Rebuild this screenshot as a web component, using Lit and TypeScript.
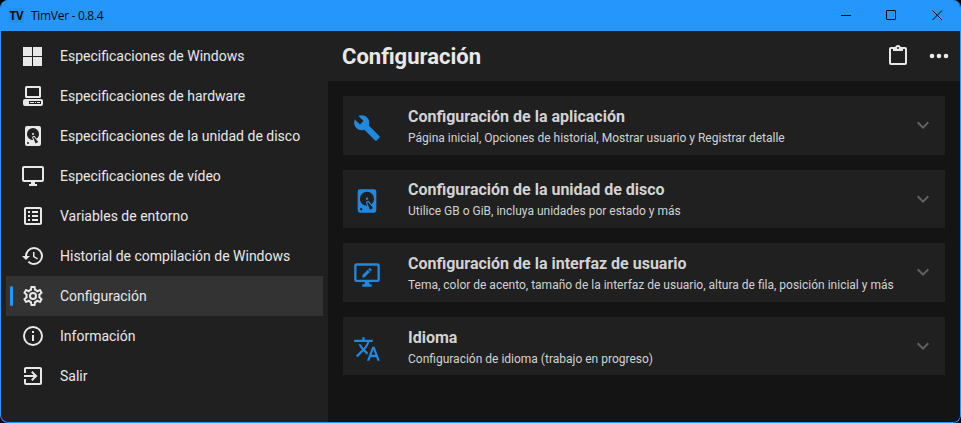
import { LitElement, html, css, svg } from "lit";
import { customElement, property } from "lit/decorators.js";

const ICONS: Record<string, string> = {
  windows: "M2,3H11V12H2V3M11,22H2V13H11V22M21,3V12H12V3H21M21,22H12V13H21V22Z",
  desktop:
    "M5.5,2H18.5A1.5,1.5 0 0,1 20,3.5V12.5A1.5,1.5 0 0,1 18.5,14H5.5A1.5,1.5 0 0,1 4,12.5V3.5A1.5,1.5 0 0,1 5.5,2M6,4V12H18V4H6M4,15H20A2,2 0 0,1 22,17V20A2,2 0 0,1 20,22H4A2,2 0 0,1 2,20V17A2,2 0 0,1 4,15M8,17V20H20V17H8M9,18H13V19H9V18M14,18H15V19H14V18M16,18H19V19H16V18Z",
  disk: "M6,2H18A2,2 0 0,1 20,4V20A2,2 0 0,1 18,22H6A2,2 0 0,1 4,20V4A2,2 0 0,1 6,2M12,4A6,6 0 0,0 6,10C6,13.31 8.69,16 12.1,16L11.22,13.77C10.95,13.29 11.11,12.68 11.59,12.4L12.45,11.9C12.93,11.63 13.54,11.79 13.82,12.27L15.74,14.69C17.12,13.59 18,11.9 18,10A6,6 0 0,0 12,4M12,9A1,1 0 0,1 13,10A1,1 0 0,1 12,11A1,1 0 0,1 11,10A1,1 0 0,1 12,9M7,18A1,1 0 0,0 6,19A1,1 0 0,0 7,20A1,1 0 0,0 8,19A1,1 0 0,0 7,18M12.09,13.27L14.58,19.58L17.17,18.08L12.95,12.77L12.09,13.27Z",
  monitor:
    "M21,16H3V4H21M21,2H3C1.89,2 1,2.89 1,4V16A2,2 0 0,0 3,18H10V20H8V22H16V20H14V18H21A2,2 0 0,0 23,16V4C23,2.89 22.1,2 21,2Z",
  monitorEdit:
    "M21,16V4H3V16H21M21,2A2,2 0 0,1 23,4V16A2,2 0 0,1 21,18H14V20H16V22H8V20H10V18H3A2,2 0 0,1 1,16V4A2,2 0 0,1 3,2H21M8,12.3L12.7,7.6L14.5,9.4L9.8,14.1H8V12.3M13.2,7.1L14.1,6.2C14.3,6 14.6,6 14.8,6.2L15.9,7.3C16.1,7.5 16.1,7.8 15.9,8L15,8.9L13.2,7.1Z",
  list: "M11 15H17V17H11V15M9 7H7V9H9V7M11 13H17V11H11V13M11 9H17V7H11V9M9 11H7V13H9V11M21 5V19C21 20.1 20.1 21 19 21H5C3.9 21 3 20.1 3 19V5C3 3.9 3.9 3 5 3H19C20.1 3 21 3.9 21 5M19 5H5V19H19V5M9 15H7V17H9V15Z",
  history:
    "M13.5,8H12V13L16.28,15.54L17,14.33L13.5,12.25V8M13,3A9,9 0 0,0 4,12H1L4.96,16.03L9,12H6A7,7 0 0,1 13,5A7,7 0 0,1 20,12A7,7 0 0,1 13,19C11.07,19 9.32,18.21 8.06,16.94L6.64,18.36C8.27,20 10.5,21 13,21A9,9 0 0,0 22,12A9,9 0 0,0 13,3",
  cog: "M12,8A4,4 0 0,1 16,12A4,4 0 0,1 12,16A4,4 0 0,1 8,12A4,4 0 0,1 12,8M12,10A2,2 0 0,0 10,12A2,2 0 0,0 12,14A2,2 0 0,0 14,12A2,2 0 0,0 12,10M10,22C9.75,22 9.54,21.82 9.5,21.58L9.13,18.93C8.5,18.68 7.96,18.34 7.44,17.94L4.95,18.95C4.73,19.03 4.46,18.95 4.34,18.73L2.34,15.27C2.21,15.05 2.27,14.78 2.46,14.63L4.57,12.97L4.5,12L4.57,11L2.46,9.37C2.27,9.22 2.21,8.95 2.34,8.73L4.34,5.27C4.46,5.05 4.73,4.96 4.95,5.05L7.44,6.05C7.96,5.66 8.5,5.32 9.13,5.07L9.5,2.42C9.54,2.18 9.75,2 10,2H14C14.25,2 14.46,2.18 14.5,2.42L14.87,5.07C15.5,5.32 16.04,5.66 16.56,6.05L19.05,5.05C19.27,4.96 19.54,5.05 19.66,5.27L21.66,8.73C21.79,8.95 21.73,9.22 21.54,9.37L19.43,11L19.5,12L19.43,13L21.54,14.63C21.73,14.78 21.79,15.05 21.66,15.27L19.66,18.73C19.54,18.95 19.27,19.04 19.05,18.95L16.56,17.95C16.04,18.34 15.5,18.68 14.87,18.93L14.5,21.58C14.46,21.82 14.25,22 14,22H10M11.25,4L10.88,6.61C9.68,6.86 8.62,7.5 7.85,8.39L5.44,7.35L4.69,8.65L6.8,10.2C6.4,11.37 6.4,12.64 6.8,13.8L4.68,15.36L5.43,16.66L7.86,15.62C8.63,16.5 9.68,17.14 10.87,17.38L11.24,20H12.76L13.13,17.39C14.32,17.14 15.37,16.5 16.14,15.62L18.57,16.66L19.32,15.36L17.2,13.81C17.6,12.64 17.6,11.37 17.2,10.2L19.31,8.65L18.56,7.35L16.15,8.39C15.38,7.5 14.32,6.86 13.12,6.62L12.75,4H11.25Z",
  info: "M11,9H13V7H11M12,20C7.59,20 4,16.41 4,12C4,7.59 7.59,4 12,4C16.41,4 20,7.59 20,12C20,16.41 16.41,20 12,20M12,2A10,10 0 0,0 2,12A10,10 0 0,0 12,22A10,10 0 0,0 22,12A10,10 0 0,0 12,2M11,17H13V11H11V17Z",
  exit: "M19,3H5C3.89,3 3,3.89 3,5V9H5V5H19V19H5V15H3V19A2,2 0 0,0 5,21H19A2,2 0 0,0 21,19V5C21,3.89 20.1,3 19,3M10.08,15.58L11.5,17L16.5,12L11.5,7L10.08,8.41L12.67,11H3V13H12.67L10.08,15.58Z",
  wrench:
    "M22.7,19L13.6,9.9C14.5,7.6 14,4.9 12.1,3C10.1,1 7.1,0.6 4.7,1.7L9,6L6,9L1.6,4.7C0.4,7.1 0.9,10.1 2.9,12.1C4.8,14 7.5,14.5 9.8,13.6L18.9,22.7C19.3,23.1 19.9,23.1 20.3,22.7L22.6,20.4C23.1,20 23.1,19.3 22.7,19Z",
  translate:
    "M12.87,15.07L10.33,12.56L10.36,12.53C12.1,10.59 13.34,8.36 14.07,6H17V4H10V2H8V4H1V6H12.17C11.5,7.92 10.44,9.75 9,11.35C8.07,10.32 7.3,9.19 6.69,8H4.69C5.42,9.63 6.42,11.17 7.67,12.56L2.58,17.58L4,19L9,14L12.11,17.11L12.87,15.07M18.5,10H16.5L12,22H14L15.12,19H19.87L21,22H23L18.5,10M15.88,17L17.5,12.67L19.12,17H15.88Z",
  clipboard:
    "M19,3H14.82C14.4,1.84 13.3,1 12,1C10.7,1 9.6,1.84 9.18,3H5A2,2 0 0,0 3,5V19A2,2 0 0,0 5,21H19A2,2 0 0,0 21,19V5A2,2 0 0,0 19,3M12,3A1,1 0 0,1 13,4A1,1 0 0,1 12,5A1,1 0 0,1 11,4A1,1 0 0,1 12,3M7,7H17V5H19V19H5V5H7V7Z",
  dots: "M16,12A2,2 0 0,1 18,10A2,2 0 0,1 20,12A2,2 0 0,1 18,14A2,2 0 0,1 16,12M10,12A2,2 0 0,1 12,10A2,2 0 0,1 14,12A2,2 0 0,1 12,14A2,2 0 0,1 10,12M4,12A2,2 0 0,1 6,10A2,2 0 0,1 8,12A2,2 0 0,1 6,14A2,2 0 0,1 4,12Z",
  chevron: "M7.41,8.58L12,13.17L16.59,8.58L18,10L12,16L6,10L7.41,8.58Z",
};

@customElement("tv-icon")
export class TvIcon extends LitElement {
  @property() name = "";

  static styles = css`
    :host {
      display: block;
      flex: none;
      width: 24px;
      height: 24px;
    }
    .glyph {
      display: block;
      width: 100%;
      height: 100%;
      fill: currentColor;
      fill-rule: evenodd;
    }
  `;

  render() {
    return html`<svg class="glyph" viewBox="0 0 24 24">${svg`<path d=${ICONS[this.name]}></path>`}</svg>`;
  }
}

const NAV = [
  ["windows", "Especificaciones de Windows"],
  ["desktop", "Especificaciones de hardware"],
  ["disk", "Especificaciones de la unidad de disco"],
  ["monitor", "Especificaciones de vídeo"],
  ["list", "Variables de entorno"],
  ["history", "Historial de compilación de Windows"],
  ["cog", "Configuración"],
  ["info", "Información"],
  ["exit", "Salir"],
];

const CARDS = [
  ["wrench", "Configuración de la aplicación", "Página inicial, Opciones de historial, Mostrar usuario y Registrar detalle"],
  ["disk", "Configuración de la unidad de disco", "Utilice GB o GiB, incluya unidades por estado y más"],
  ["monitorEdit", "Configuración de la interfaz de usuario", "Tema, color de acento, tamaño de la interfaz de usuario, altura de fila, posición inicial y más"],
  ["translate", "Idioma", "Configuración de idioma (trabajo en progreso)"],
];

@customElement("app-root")
export class AppRoot extends LitElement {
  static styles = css`
    :host {
      display: block;
      height: 423px;
      background: #000;
      font-family: Roboto, "Liberation Sans", sans-serif;
      color: #e8e8e8;
    }
    .window {
      box-sizing: border-box;
      height: 423px;
      display: flex;
      flex-direction: column;
      border: 1px solid #2596fb;
      border-top: 0;
      border-radius: 8px;
      overflow: hidden;
      background: #202020;
    }
    .titlebar {
      flex: none;
      height: 31px;
      display: flex;
      align-items: center;
      background: #2596fb;
      color: #0a0a0a;
    }
    .logo {
      width: 15px;
      height: 15px;
      margin-left: 8px;
      display: flex;
      align-items: center;
      justify-content: center;
      background: #2490ee;
      font: 700 11.5px/13px "Open Sans", sans-serif;
      padding-bottom: 1px;
      box-sizing: border-box;
    }
    .caption {
      flex: 1;
      margin-left: 7px;
      font: 12px/16px "Open Sans", sans-serif;
      letter-spacing: -0.3px;
    }
    .controls {
      display: flex;
      margin-right: -1px;
    }
    .control {
      display: block;
      width: 46px;
      height: 31px;
      fill: none;
      stroke: #0a0a0a;
      stroke-width: 1;
    }
    .body {
      flex: 1;
      display: flex;
      min-height: 0;
    }
    .nav {
      flex: none;
      box-sizing: border-box;
      width: 327px;
      padding: 5px 5px 0;
    }
    .item {
      display: flex;
      align-items: center;
      height: 40px;
      font-size: 14px;
      white-space: nowrap;
    }
    .item.selected {
      background: #333333;
    }
    .marker {
      width: 3px;
      height: 20px;
      margin: 0 8px 0 4px;
      border-radius: 1.5px;
    }
    .selected .marker {
      background: #2596fb;
    }
    .item .label {
      margin-left: 15px;
    }
    .main {
      flex: 1;
      display: flex;
      flex-direction: column;
      min-width: 0;
    }
    .header {
      flex: none;
      height: 50px;
      display: flex;
      align-items: center;
      padding: 0 7.5px 0 14px;
    }
    .heading {
      flex: 1;
      margin: 0;
      padding-top: 1px;
      font-size: 22px;
      font-weight: 700;
      line-height: 28px;
    }
    .more {
      width: 28px;
      height: 28px;
      margin-left: 15px;
    }
    .cards {
      flex: 1;
      display: flex;
      flex-direction: column;
      gap: 15px;
      padding: 15px 15px 0;
      background: #141414;
    }
    .card {
      display: flex;
      align-items: center;
      height: 58.6px;
      padding: 0 10px;
      background: #202020;
      color: #d2d2d2;
      white-space: nowrap;
    }
    .card-icon {
      width: 28px;
      height: 28px;
      margin-top: 5px;
      color: #2288dd;
    }
    .texts {
      flex: 1;
      margin-left: 27px;
      padding-top: 4px;
    }
    .title {
      font-size: 16px;
      font-weight: 700;
      line-height: 22px;
    }
    .subtitle {
      font-size: 12px;
      line-height: 21px;
    }
    .chevron {
      color: #606060;
    }
  `;

  render() {
    return html`
      <div class="window">
        <div class="titlebar">
          <div class="logo">TV</div>
          <div class="caption">TimVer - 0.8.4</div>
          <div class="controls">
            <svg class="control" viewBox="0 0 46 31"><path d="M18 15.5H28"></path></svg>
            <svg class="control" viewBox="0 0 46 31"><rect x="17.5" y="10.5" width="9" height="9" rx="0.5"></rect></svg>
            <svg class="control" viewBox="0 0 46 31"><path d="M17.5 10.5L27 20M27 10.5L17.5 20"></path></svg>
          </div>
        </div>
        <div class="body">
          <nav class="nav">
            ${NAV.map(
              ([icon, label]) => html`
                <div class="item ${icon === "cog" ? "selected" : ""}">
                  <span class="marker"></span>
                  <tv-icon name=${icon}></tv-icon>
                  <span class="label">${label}</span>
                </div>
              `
            )}
          </nav>
          <main class="main">
            <div class="header">
              <h1 class="heading">Configuración</h1>
              <tv-icon name="clipboard"></tv-icon>
              <tv-icon class="more" name="dots"></tv-icon>
            </div>
            <div class="cards">
              ${CARDS.map(
                ([icon, title, subtitle]) => html`
                  <section class="card">
                    <tv-icon class="card-icon" name=${icon}></tv-icon>
                    <div class="texts">
                      <div class="title">${title}</div>
                      <div class="subtitle">${subtitle}</div>
                    </div>
                    <tv-icon class="chevron" name="chevron"></tv-icon>
                  </section>
                `
              )}
            </div>
          </main>
        </div>
      </div>
    `;
  }
}
